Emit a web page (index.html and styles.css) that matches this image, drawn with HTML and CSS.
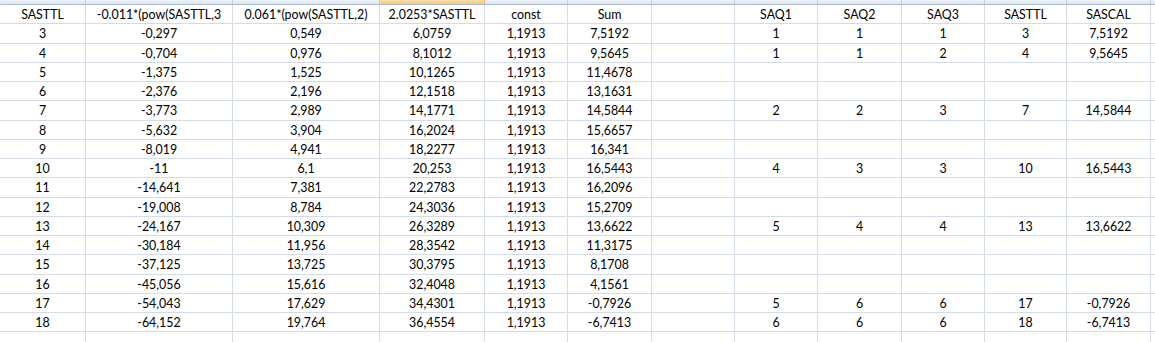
FILE: index.html
```html
<!DOCTYPE html>
<html>
<head>
<meta charset="utf-8">
<link rel="stylesheet" href="styles.css">
</head>
<body>
<div class="sheet">
  <div class="colbar">
    <div class="ch"></div><div class="ch"></div><div class="ch"></div><div class="ch sel"></div><div class="ch"></div><div class="ch"></div><div class="ch"></div><div class="ch"></div><div class="ch"></div><div class="ch"></div><div class="ch"></div><div class="ch"></div><div class="ch"></div>
  </div>
  <div class="grid">
    <div class="c">SASTTL</div><div class="c">-0.011*(pow(SASTTL,3</div><div class="c">0.061*(pow(SASTTL,2)</div><div class="c">2.0253*SASTTL</div><div class="c">const</div><div class="c">Sum</div><div class="c"></div><div class="c">SAQ1</div><div class="c">SAQ2</div><div class="c">SAQ3</div><div class="c">SASTTL</div><div class="c">SASCAL</div><div class="c"></div>
    <div class="c">3</div><div class="c">-0,297</div><div class="c">0,549</div><div class="c">6,0759</div><div class="c">1,1913</div><div class="c">7,5192</div><div class="c"></div><div class="c">1</div><div class="c">1</div><div class="c">1</div><div class="c">3</div><div class="c">7,5192</div><div class="c"></div>
    <div class="c">4</div><div class="c">-0,704</div><div class="c">0,976</div><div class="c">8,1012</div><div class="c">1,1913</div><div class="c">9,5645</div><div class="c"></div><div class="c">1</div><div class="c">1</div><div class="c">2</div><div class="c">4</div><div class="c">9,5645</div><div class="c"></div>
    <div class="c">5</div><div class="c">-1,375</div><div class="c">1,525</div><div class="c">10,1265</div><div class="c">1,1913</div><div class="c">11,4678</div><div class="c"></div><div class="c"></div><div class="c"></div><div class="c"></div><div class="c"></div><div class="c"></div><div class="c"></div>
    <div class="c">6</div><div class="c">-2,376</div><div class="c">2,196</div><div class="c">12,1518</div><div class="c">1,1913</div><div class="c">13,1631</div><div class="c"></div><div class="c"></div><div class="c"></div><div class="c"></div><div class="c"></div><div class="c"></div><div class="c"></div>
    <div class="c">7</div><div class="c">-3,773</div><div class="c">2,989</div><div class="c">14,1771</div><div class="c">1,1913</div><div class="c">14,5844</div><div class="c"></div><div class="c">2</div><div class="c">2</div><div class="c">3</div><div class="c">7</div><div class="c">14,5844</div><div class="c"></div>
    <div class="c">8</div><div class="c">-5,632</div><div class="c">3,904</div><div class="c">16,2024</div><div class="c">1,1913</div><div class="c">15,6657</div><div class="c"></div><div class="c"></div><div class="c"></div><div class="c"></div><div class="c"></div><div class="c"></div><div class="c"></div>
    <div class="c">9</div><div class="c">-8,019</div><div class="c">4,941</div><div class="c">18,2277</div><div class="c">1,1913</div><div class="c">16,341</div><div class="c"></div><div class="c"></div><div class="c"></div><div class="c"></div><div class="c"></div><div class="c"></div><div class="c"></div>
    <div class="c">10</div><div class="c">-11</div><div class="c">6,1</div><div class="c">20,253</div><div class="c">1,1913</div><div class="c">16,5443</div><div class="c"></div><div class="c">4</div><div class="c">3</div><div class="c">3</div><div class="c">10</div><div class="c">16,5443</div><div class="c"></div>
    <div class="c">11</div><div class="c">-14,641</div><div class="c">7,381</div><div class="c">22,2783</div><div class="c">1,1913</div><div class="c">16,2096</div><div class="c"></div><div class="c"></div><div class="c"></div><div class="c"></div><div class="c"></div><div class="c"></div><div class="c"></div>
    <div class="c">12</div><div class="c">-19,008</div><div class="c">8,784</div><div class="c">24,3036</div><div class="c">1,1913</div><div class="c">15,2709</div><div class="c"></div><div class="c"></div><div class="c"></div><div class="c"></div><div class="c"></div><div class="c"></div><div class="c"></div>
    <div class="c">13</div><div class="c">-24,167</div><div class="c">10,309</div><div class="c">26,3289</div><div class="c">1,1913</div><div class="c">13,6622</div><div class="c"></div><div class="c">5</div><div class="c">4</div><div class="c">4</div><div class="c">13</div><div class="c">13,6622</div><div class="c"></div>
    <div class="c">14</div><div class="c">-30,184</div><div class="c">11,956</div><div class="c">28,3542</div><div class="c">1,1913</div><div class="c">11,3175</div><div class="c"></div><div class="c"></div><div class="c"></div><div class="c"></div><div class="c"></div><div class="c"></div><div class="c"></div>
    <div class="c">15</div><div class="c">-37,125</div><div class="c">13,725</div><div class="c">30,3795</div><div class="c">1,1913</div><div class="c">8,1708</div><div class="c"></div><div class="c"></div><div class="c"></div><div class="c"></div><div class="c"></div><div class="c"></div><div class="c"></div>
    <div class="c">16</div><div class="c">-45,056</div><div class="c">15,616</div><div class="c">32,4048</div><div class="c">1,1913</div><div class="c">4,1561</div><div class="c"></div><div class="c"></div><div class="c"></div><div class="c"></div><div class="c"></div><div class="c"></div><div class="c"></div>
    <div class="c">17</div><div class="c">-54,043</div><div class="c">17,629</div><div class="c">34,4301</div><div class="c">1,1913</div><div class="c">-0,7926</div><div class="c"></div><div class="c">5</div><div class="c">6</div><div class="c">6</div><div class="c">17</div><div class="c">-0,7926</div><div class="c"></div>
    <div class="c">18</div><div class="c">-64,152</div><div class="c">19,764</div><div class="c">36,4554</div><div class="c">1,1913</div><div class="c">-6,7413</div><div class="c"></div><div class="c">6</div><div class="c">6</div><div class="c">6</div><div class="c">18</div><div class="c">-6,7413</div><div class="c"></div>
    <div class="c"></div><div class="c"></div><div class="c"></div><div class="c"></div><div class="c"></div><div class="c"></div><div class="c"></div><div class="c"></div><div class="c"></div><div class="c"></div><div class="c"></div><div class="c"></div><div class="c"></div>
  </div>
</div>
</body>
</html>
```
FILE: styles.css
```css
html, body {
  margin: 0;
  padding: 0;
  background: #ffffff;
}
.sheet {
  width: 1155px;
  height: 342px;
  overflow: hidden;
  font-family: Lato, "Liberation Sans", Arial, sans-serif;
  font-size: 12.4px;
  color: #000;
}
.colbar {
  display: grid;
  grid-template-columns: 86px 147px 147px 105px 83px 84px 83px 83px 84px 83px 82px 84px 20px;
  height: 4px;
  border-bottom: 1px solid #a9bcd3;
  background: #e1e8f2;
}
.ch {
  border-right: 1px solid #c5d1df;
  background: linear-gradient(#eef3f9, #dbe4ef);
}
.ch.sel {
  background: linear-gradient(#fbe2b1, #f7c66f);
  border-right-color: #f0b860;
}
.grid {
  display: grid;
  grid-template-columns: 86px 147px 147px 105px 83px 84px 83px 83px 84px 83px 82px 84px 20px;
  grid-auto-rows: 19.25px;
}
.c {
  border-right: 1px solid #d3dbe7;
  border-bottom: 1px solid #d3dbe7;
  display: flex;
  align-items: center;
  justify-content: center;
  white-space: nowrap;
  overflow: hidden;
  padding-top: 1px;
  box-sizing: border-box;
}
```
